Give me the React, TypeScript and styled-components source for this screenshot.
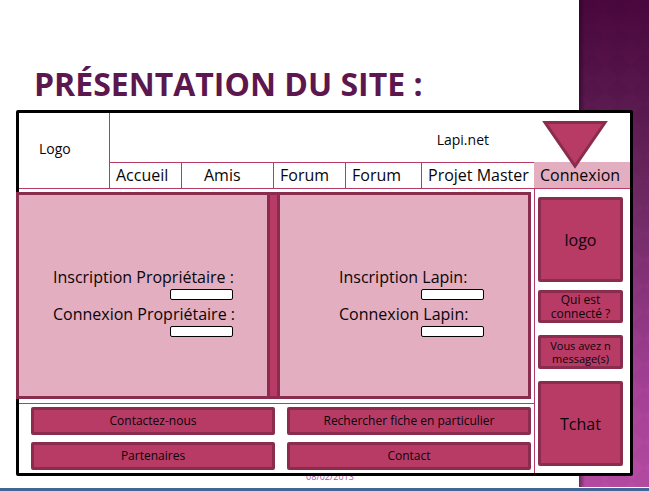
import React from "react";
import styled, { createGlobalStyle, css } from "styled-components";

const crimson = "#b83b66";
const maroon = "#8a2c4d";
const rose = "#e3aebf";

const GlobalStyle = createGlobalStyle`
  *, *::before, *::after { box-sizing: border-box; }
  body {
    margin: 0;
    background: #fff;
    color: #0a0508;
    font-family: "Open Sans", "Noto Sans", sans-serif;
    font-size: 16px;
    line-height: 20px;
  }
`;

const Slide = styled.div`
  position: relative;
  display: flex;
  flex-direction: column;
  min-height: 100vh;
  border-bottom: 3px solid #416595;
`;

const Band = styled.div`
  position: absolute;
  top: 0;
  right: 0;
  bottom: 1px;
  width: 70px;
  overflow: hidden;
  background: linear-gradient(#4a073e, #5b1a50 110px, #712a65 200px, #a84299 390px, #b84ca5);

  &::after {
    content: "";
    position: absolute;
    inset: 0;
    background: linear-gradient(90deg, rgba(30, 0, 25, 0.5), transparent 6px);
  }
`;

const BandPattern = styled.svg`
  display: block;
  width: 100%;
  height: 100%;
`;

const Title = styled.h1`
  margin: 0;
  padding: 62px 80px 4px 34px;
  color: #5c174e;
  font-size: 32px;
  font-weight: 700;
  line-height: 44px;
`;

const Frame = styled.div`
  position: relative;
  z-index: 1;
  flex: 1;
  display: flex;
  flex-direction: column;
  margin: 0 16px;
  border: 3px solid #000;
  border-radius: 2px;
  background: #fff;
`;

const Header = styled.header`
  display: flex;
  border-bottom: 1px solid ${crimson};
`;

const Brand = styled.div`
  flex: 0 0 91px;
  display: flex;
  align-items: center;
  padding: 0 0 4px 20px;
  border-right: 1px solid ${crimson};
  font-size: 14px;
`;

const HeaderMain = styled.div`
  flex: 1;
`;

const Banner = styled.div`
  position: relative;
  display: flex;
  justify-content: flex-end;
  align-items: center;
  height: 49px;
  padding: 4px 141px 0 0;
  font-size: 14px;
`;

const Pointer = styled.svg`
  position: absolute;
  z-index: 1;
  top: 7px;
  right: 21px;
`;

const Nav = styled.nav`
  display: grid;
  grid-template-columns:
    minmax(0, 72fr) minmax(0, 92fr) minmax(0, 72fr)
    minmax(0, 76fr) minmax(0, 112fr) 96px;
`;

const NavLink = styled.a<{ $indent?: number; $active?: boolean; $last?: boolean }>`
  padding: 2px 0 3px ${(p) => p.$indent ?? 6}px;
  border-top: 1px solid ${crimson};
  border-right: 1px solid ${crimson};
  color: inherit;
  text-decoration: none;
  white-space: nowrap;
  ${(p) => p.$last && css`border-right: 0;`}
  ${(p) =>
    p.$active &&
    css`
      border-right: 0;
      border-top-color: ${rose};
      background: ${rose};
    `}
`;

const Body = styled.div`
  flex: 1;
  display: flex;
`;

const Main = styled.main`
  flex: 1;
  display: flex;
  flex-direction: column;
`;

const Panels = styled.div`
  flex: 1;
  display: grid;
  grid-template-columns: 1fr 7px 1fr;
  margin: 3px 3px 0 -3px;
`;

const Panel = styled.form<{ $indent: number }>`
  display: flex;
  flex-direction: column;
  align-items: flex-start;
  gap: 4px;
  padding: 72px 0 0 ${(p) => p.$indent}px;
  border: 3px solid ${maroon};
  background: ${rose};
`;

const Divider = styled.div`
  border: solid ${maroon};
  border-width: 3px 0;
  background: ${crimson};
`;

const Field = styled.label<{ $width: number }>`
  display: flex;
  flex-direction: column;
  gap: 2px;
  width: ${(p) => p.$width}px;
  white-space: nowrap;
`;

const TextInput = styled.input`
  align-self: flex-end;
  width: 63px;
  height: 11px;
  padding: 0 3px;
  border: 1px solid #000;
  border-radius: 2px;
  background: #fff;
  font: inherit;
  font-size: 8px;
`;

const block = css`
  border: 3px solid ${maroon};
  border-radius: 2px;
  background: ${crimson};
  color: inherit;
  font: inherit;
  text-align: center;
`;

const Actions = styled.div`
  display: grid;
  grid-template-columns: 1fr 1fr;
  gap: 7px 12px;
  margin-top: 4px;
  padding: 3px 3px 3px 12px;
  border-top: 1px solid ${crimson};
`;

const ActionButton = styled.button`
  ${block}
  height: 28px;
  padding: 0;
  font-size: 12px;
  line-height: 20px;
`;

const Side = styled.aside`
  flex: 0 0 96px;
  display: flex;
  flex-direction: column;
  padding: 8px 7px 7px 3px;
  border-left: 1px solid ${crimson};
`;

const SideButton = styled.button<{ $size?: "small" | "tiny"; $gap?: number }>`
  ${block}
  height: 85px;
  margin-top: ${(p) => p.$gap ?? 0}px;
  padding: 0;
  ${(p) => p.$size === "small" && css`height: 33px; font-size: 12px; line-height: 14px;`}
  ${(p) => p.$size === "tiny" && css`height: 34px; font-size: 11px; line-height: 13px;`}
`;

const SlideDate = styled.footer`
  margin-top: -8px;
  padding: 0 0 2px 11px;
  color: #b254a2;
  font-size: 9px;
  line-height: 18px;
  text-align: center;
`;

export default function App() {
  return (
    <>
      <GlobalStyle />
      <Slide>
        <Band>
          <BandPattern aria-hidden="true">
            <defs>
              <pattern id="diamonds" width="26" height="26" patternUnits="userSpaceOnUse">
                <path d="M13 0L26 13L13 26L0 13Z" fill="#000" fillOpacity="0.03" />
              </pattern>
            </defs>
            <rect width="100%" height="100%" fill="url(#diamonds)" />
          </BandPattern>
        </Band>
        <Title>PRÉSENTATION DU SITE :</Title>
        <Frame>
          <Header>
            <Brand>Logo</Brand>
            <HeaderMain>
              <Banner>
                Lapi.net
                <Pointer width="68" height="50" viewBox="0 0 68 50" aria-hidden="true">
                  <path d="M4 2.5H64L34 46Z" fill={crimson} stroke={maroon} strokeWidth="3" strokeMiterlimit="10" />
                </Pointer>
              </Banner>
              <Nav>
                <NavLink href="#accueil">Accueil</NavLink>
                <NavLink href="#amis" $indent={22}>Amis</NavLink>
                <NavLink href="#forum">Forum</NavLink>
                <NavLink href="#forum-2">Forum</NavLink>
                <NavLink href="#projet" $last>Projet Master</NavLink>
                <NavLink href="#connexion" $active>Connexion</NavLink>
              </Nav>
            </HeaderMain>
          </Header>
          <Body>
            <Main>
              <Panels>
                <Panel $indent={34}>
                  <Field $width={180}>Inscription Propriétaire :<TextInput type="text" /></Field>
                  <Field $width={180}>Connexion Propriétaire :<TextInput type="text" /></Field>
                </Panel>
                <Divider />
                <Panel $indent={59}>
                  <Field $width={145}>Inscription Lapin:<TextInput type="text" /></Field>
                  <Field $width={145}>Connexion Lapin:<TextInput type="text" /></Field>
                </Panel>
              </Panels>
              <Actions>
                <ActionButton type="button">Contactez-nous</ActionButton>
                <ActionButton type="button">Rechercher fiche en particulier</ActionButton>
                <ActionButton type="button">Partenaires</ActionButton>
                <ActionButton type="button">Contact</ActionButton>
              </Actions>
            </Main>
            <Side>
              <SideButton type="button">logo</SideButton>
              <SideButton type="button" $size="small" $gap={8}>Qui est<br />connecté ?</SideButton>
              <SideButton type="button" $size="tiny" $gap={12}>Vous avez n<br />message(s)</SideButton>
              <SideButton type="button" $gap={12}>Tchat</SideButton>
            </Side>
          </Body>
        </Frame>
        <SlideDate>08/02/2013</SlideDate>
      </Slide>
    </>
  );
}
